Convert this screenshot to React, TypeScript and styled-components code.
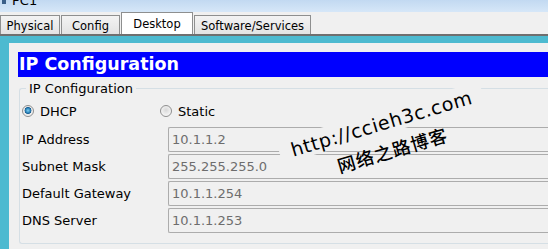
import styled, { createGlobalStyle } from "styled-components";

const GlobalStyle = createGlobalStyle`
  html, body {
    margin: 0;
    padding: 0;
    background: #f0f0f0;
    overflow: hidden;
  }
  body {
    font-family: "DejaVu Sans", Verdana, sans-serif;
  }
`;

const Window = styled.div`
  width: 548px;
  height: 249px;
  display: flex;
  flex-direction: column;
  overflow: hidden;
  position: relative;
`;

const TitleBar = styled.div`
  height: 12px;
  flex: none;
  display: flex;
  align-items: flex-start;
  overflow: hidden;
  background: linear-gradient(#c2d9f1, #d6e7f8);
  padding-left: 2px;
`;

const AppIcon = styled.span`
  width: 4px;
  height: 4px;
  background: #3a5f88;
  margin-right: 6px;
`;

const TitleText = styled.span`
  font-size: 13px;
  line-height: 12px;
  margin-top: -5px;
  color: #000;
`;

const TabStrip = styled.div`
  height: 24px;
  flex: none;
  display: flex;
  align-items: flex-end;
  background: #f0f0f0;
  border-bottom: 2px solid #6f6f6f;
  box-sizing: border-box;
`;

const Tab = styled.div<{ $active?: boolean; $w: number }>`
  width: ${(p) => p.$w}px;
  height: ${(p) => (p.$active ? 22 : 19)}px;
  box-sizing: border-box;
  margin-right: 1px;
  border: 1px solid #8e8f8f;
  border-bottom: none;
  background: ${(p) =>
    p.$active ? "#ffffff" : "linear-gradient(#f3f3f3, #e3e3e3)"};
  font-size: 11.5px;
  color: #000;
  display: flex;
  align-items: center;
  justify-content: center;
  padding-top: ${(p) => (p.$active ? 0 : 1)}px;
`;

const Body = styled.div`
  flex: 1;
  background: #4dbad0;
  padding: 7px 0 0 9px;
  display: flex;
  min-height: 0;
`;

const Panel = styled.div`
  flex: 1;
  background: #f0f0f0;
  padding: 9px 0 0 9px;
  display: flex;
  flex-direction: column;
`;

const Header = styled.div`
  height: 25px;
  flex: none;
  background: #0000ff;
  color: #fff;
  font-weight: bold;
  font-size: 17.5px;
  line-height: 25px;
  padding-left: 1px;
  white-space: nowrap;
`;

const Group = styled.fieldset`
  margin: 4px 0 0 1px;
  padding: 0 0 10px 1px;
  border: 1px solid #d5dfe5;
  border-right: none;
  border-radius: 3px 0 0 3px;
  min-width: 0;
`;

const Legend = styled.legend`
  font-size: 13px;
  padding: 0 3px;
  margin-left: 5px;
  color: #000;
`;

const RadioRow = styled.div`
  display: flex;
  align-items: center;
  height: 22px;
  margin-top: 4px;
`;

const RadioOption = styled.label<{ $w: number }>`
  width: ${(p) => p.$w}px;
  display: flex;
  align-items: center;
  font-size: 13px;
  color: #000;
`;

const RadioDot = styled.span<{ $checked?: boolean }>`
  width: 10px;
  height: 10px;
  border-radius: 50%;
  border: 1px solid #8f8f8f;
  margin: 0 6px 0 1px;
  background: ${(p) =>
    p.$checked
      ? "radial-gradient(circle at 50% 45%, #7fd0f5 0, #2c84b8 2.3px, #1b5f93 3.2px, #e7e7e7 3.7px, #f6f6f6 6px)"
      : "radial-gradient(circle at 50% 40%, #d7d7d7 0, #e8e8e8 3px, #f7f7f7 6px)"};
`;

const Rows = styled.div`
  display: flex;
  flex-direction: column;
  gap: 2px;
  margin-top: 5px;
`;

const Row = styled.div`
  display: flex;
  align-items: center;
  height: 25px;
`;

const Label = styled.span`
  width: 146px;
  flex: none;
  font-size: 13px;
  color: #000;
  padding-left: 1px;
`;

const Field = styled.div`
  flex: 1;
  height: 25px;
  box-sizing: border-box;
  border: 1px solid #acacac;
  border-right: none;
  border-radius: 2px 0 0 2px;
  background: #f0f0f0;
  color: #6d6d6d;
  font-size: 13px;
  line-height: 23px;
  padding-left: 3px;
`;

const Watermark = styled.div`
  position: absolute;
  left: 276px;
  top: 141px;
  transform: rotate(-16.5deg);
  transform-origin: left top;
  display: flex;
  flex-direction: column;
  align-items: center;
  color: #000;
  pointer-events: none;
`;

const WatermarkUrl = styled.span`
  font-family: "DejaVu Sans", sans-serif;
  font-size: 19px;
  letter-spacing: 0.6px;
  background: #f0f0f0;
  padding: 2px 12px 0;
  border-radius: 10px;
`;

const WatermarkName = styled.span`
  font-family: "Noto Sans CJK SC", sans-serif;
  font-size: 18px;
  font-weight: 500;
  line-height: 20px;
  margin-top: 7px;
  margin-left: 6px;
  letter-spacing: 1px;
`;

const fields = [
  { label: "IP Address", value: "10.1.1.2" },
  { label: "Subnet Mask", value: "255.255.255.0" },
  { label: "Default Gateway", value: "10.1.1.254" },
  { label: "DNS Server", value: "10.1.1.253" },
];

export default function App() {
  return (
    <Window>
      <GlobalStyle />
      <TitleBar>
        <AppIcon />
        <TitleText>PC1</TitleText>
      </TitleBar>
      <TabStrip>
        <Tab $w={60}>Physical</Tab>
        <Tab $w={59}>Config</Tab>
        <Tab $w={72} $active>
          Desktop
        </Tab>
        <Tab $w={117}>Software/Services</Tab>
      </TabStrip>
      <Body>
        <Panel>
          <Header>IP Configuration</Header>
          <Group>
            <Legend>IP Configuration</Legend>
            <RadioRow>
              <RadioOption $w={138}>
                <RadioDot $checked />
                DHCP
              </RadioOption>
              <RadioOption $w={100}>
                <RadioDot />
                Static
              </RadioOption>
            </RadioRow>
            <Rows>
              {fields.map((f) => (
                <Row key={f.label}>
                  <Label>{f.label}</Label>
                  <Field>{f.value}</Field>
                </Row>
              ))}
            </Rows>
          </Group>
        </Panel>
      </Body>
      <Watermark>
        <WatermarkUrl>http://ccieh3c.com</WatermarkUrl>
        <WatermarkName>网络之路博客</WatermarkName>
      </Watermark>
    </Window>
  );
}
